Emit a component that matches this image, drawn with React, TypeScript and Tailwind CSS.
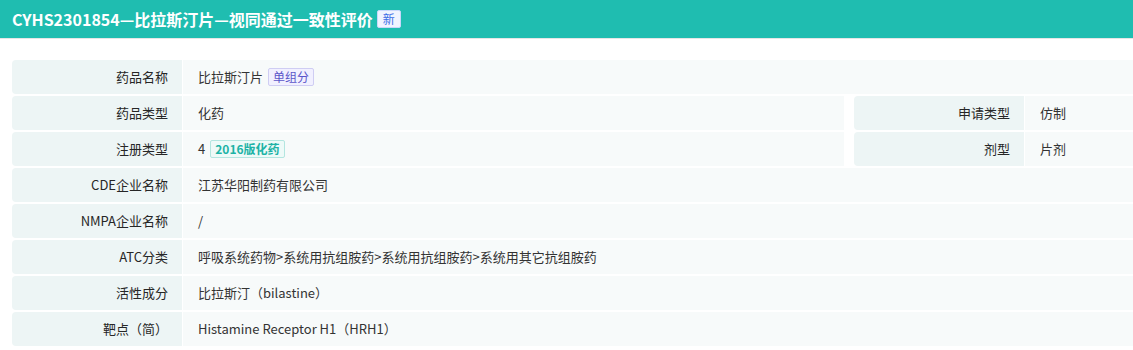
import React from 'react'

const font = { fontFamily: '"Noto Sans CJK SC", "Noto Sans", sans-serif' }

function Label({ children }: { children: React.ReactNode }) {
    return (
        <div className="w-[170px] shrink-0 bg-[#edf5f5] rounded-l-[4px] flex items-center justify-end pr-[14px] text-[13px] text-[#262626]">
            {children}
        </div>
    )
}

function Value({ children, className = '' }: { children: React.ReactNode; className?: string }) {
    return (
        <div className={`bg-[#f7fafa] flex items-center pl-[15px] text-[13px] text-[#333] ${className}`}>
            {children}
        </div>
    )
}

export default function App() {
    const rows: { label: string; value: React.ReactNode }[] = [
        { label: 'CDE企业名称', value: '江苏华阳制药有限公司' },
        { label: 'NMPA企业名称', value: '/' },
        { label: 'ATC分类', value: '呼吸系统药物>系统用抗组胺药>系统用抗组胺药>系统用其它抗组胺药' },
        { label: '活性成分', value: '比拉斯汀（bilastine）' },
        { label: '靶点（简）', value: 'Histamine Receptor H1（HRH1）' },
    ]

    return (
        <div className="w-[1133px] h-[350px] bg-white overflow-hidden" style={font}>
            {/* Header */}
            <div className="h-[38px] bg-[#1fbdb0] flex items-center pl-[12px] border-b border-[#e6e6e6] box-content">
                <span className="text-[16px] font-bold text-white">CYHS2301854—比拉斯汀片—视同通过一致性评价</span>
                <span className="ml-[4px] h-[18px] px-[5px] flex items-center bg-[#f0f4ff] border border-[#c9d7fb] rounded-[2px] text-[12px] text-[#3c6ee6]">新</span>
            </div>

            {/* Table */}
            <div className="pl-[12px] pt-[21px] flex flex-col gap-[2px]">
                <div className="flex h-[34px] gap-[1px]">
                    <Label>药品名称</Label>
                    <Value className="flex-1">
                        比拉斯汀片
                        <span className="ml-[5px] h-[18px] px-[4px] flex items-center bg-[#f1f0ff] border border-[#cfcdf3] rounded-[2px] text-[12px] text-[#5b55c9]">单组分</span>
                    </Value>
                </div>
                <div className="flex h-[34px]">
                    <div className="flex gap-[1px] w-[832px]">
                        <Label>药品类型</Label>
                        <Value className="flex-1">化药</Value>
                    </div>
                    <div className="flex gap-[1px] ml-[10px] flex-1">
                        <Label>申请类型</Label>
                        <Value className="flex-1">仿制</Value>
                    </div>
                </div>
                <div className="flex h-[34px]">
                    <div className="flex gap-[1px] w-[832px]">
                        <Label>注册类型</Label>
                        <Value className="flex-1">
                            4
                            <span className="ml-[5px] h-[18px] px-[4px] flex items-center bg-[#eefaf8] border border-[#b3e6e0] rounded-[2px] text-[12px] font-semibold text-[#1db3a6]">2016版化药</span>
                        </Value>
                    </div>
                    <div className="flex gap-[1px] ml-[10px] flex-1">
                        <Label>剂型</Label>
                        <Value className="flex-1">片剂</Value>
                    </div>
                </div>
                {rows.map(r => (
                    <div key={r.label} className="flex h-[34px] gap-[1px]">
                        <Label>{r.label}</Label>
                        <Value className="flex-1">{r.value}</Value>
                    </div>
                ))}
            </div>
        </div>
    )
}
